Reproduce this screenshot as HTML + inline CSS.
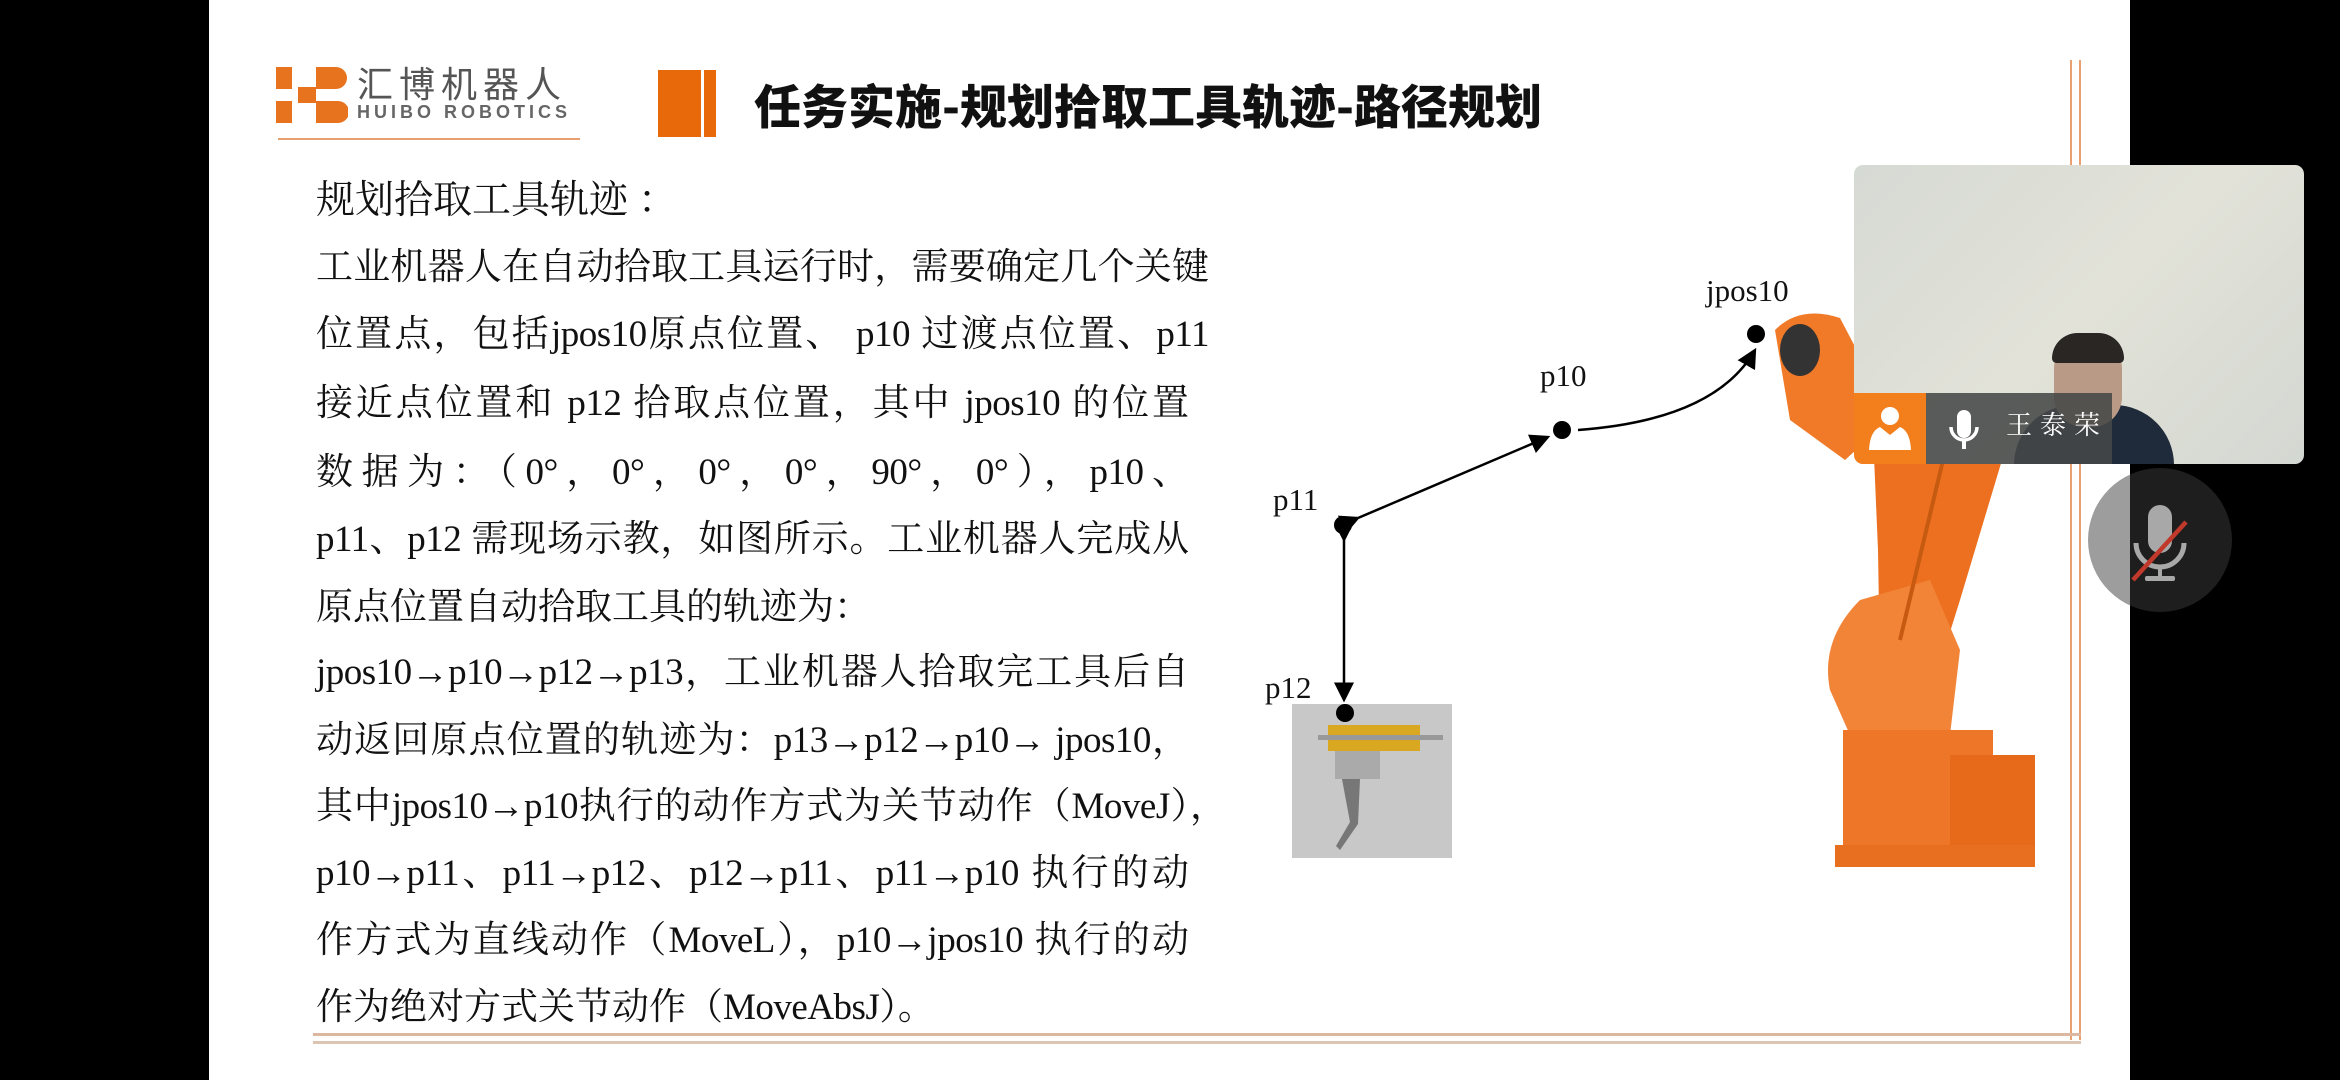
<!DOCTYPE html>
<html><head><meta charset="utf-8"><style>
html,body{margin:0;padding:0;width:2340px;height:1080px;overflow:hidden;background:#fff;position:relative}
.blk{position:absolute;background:#000;top:0;height:1080px}
.t{position:absolute;left:316px;font-family:"Liberation Serif","Noto Serif CJK SC",serif;font-size:37px;color:#111;white-space:nowrap;line-height:44px;text-align-last:justify}
.t i{font-style:normal;letter-spacing:-0.5px;font-family:"Liberation Serif",serif}
.lbl{position:absolute;font-family:"Liberation Serif",serif;font-size:31px;color:#111;line-height:34px}
</style></head><body>
<div class="blk" style="left:0;width:209px"></div>
<div class="blk" style="left:2130px;width:210px"></div>

<div style="position:absolute;left:2070px;top:60px;width:2px;height:980px;background:#e8a070"></div>
<div style="position:absolute;left:2079px;top:60px;width:2px;height:980px;background:#e8a070"></div>
<div style="position:absolute;left:313px;top:1033px;width:1768px;height:3px;background:#dcb8a0"></div>
<div style="position:absolute;left:313px;top:1041px;width:1768px;height:3px;background:#dcc4b0"></div>

<svg style="position:absolute;left:276px;top:67px" width="72" height="58" viewBox="0 0 72 58">
<rect x="0" y="0" width="16" height="22" fill="#e8731e"/><rect x="0" y="34" width="16" height="22" fill="#e8731e"/>
<rect x="22" y="20" width="18" height="16" fill="#e8731e"/>
<path d="M40 0h20a10 10 0 0 1 0 22h-20z" fill="#e8731e"/><path d="M40 34h22a11 11 0 0 1 0 22h-22z" fill="#e8731e"/>
</svg>
<div style="position:absolute;left:357px;top:62px;font-family:'Noto Sans CJK SC',sans-serif;font-size:36px;color:#555;letter-spacing:6px;line-height:40px">汇博机器人</div>
<div style="position:absolute;left:357px;top:102px;font-family:'Liberation Sans',sans-serif;font-size:18px;font-weight:bold;color:#666;letter-spacing:4px">HUIBO ROBOTICS</div>
<div style="position:absolute;left:278px;top:138px;width:302px;height:2px;background:#e8a070"></div>

<div style="position:absolute;left:658px;top:70px;width:43px;height:67px;background:#e8690a"></div>
<div style="position:absolute;left:704px;top:70px;width:12px;height:67px;background:#e8690a"></div>
<div style="position:absolute;left:754px;top:74px;font-family:'Noto Sans CJK SC',sans-serif;font-weight:900;font-size:47px;color:#111;line-height:60px;white-space:nowrap">任务实施-规划拾取工具轨迹-路径规划</div>

<div style="position:absolute;left:316px;top:173px;font-family:'Noto Serif CJK SC',serif;font-size:39px;color:#111;line-height:48px;white-space:nowrap">规划拾取工具轨迹 ：</div>

<div class="t" style="top:246px;width:893px">工业机器人在自动拾取工具运行时，需要确定几个关键</div>
<div class="t" style="top:313px;width:893px">位置点，包括<i>jpos10</i>原点位置、 <i>p10</i> 过渡点位置、<i>p11</i></div>
<div class="t" style="top:382px;width:873px">接近点位置和 <i>p12</i> 拾取点位置，其中 <i>jpos10</i> 的位置</div>
<div class="t" style="top:451px;width:873px">数据为：（<i>0°</i>，<i>0°</i>，<i>0°</i>，<i>0°</i>，<i>90°</i>，<i>0°</i>），<i>p10</i>、</div>
<div class="t" style="top:518px;width:873px"><i>p11</i>、<i>p12</i> 需现场示教，如图所示。工业机器人完成从</div>
<div class="t" style="top:586px;width:542px">原点位置自动拾取工具的轨迹为：</div>
<div class="t" style="top:651px;width:873px"><i>jpos10→p10→p12→p13</i>，工业机器人拾取完工具后自</div>
<div class="t" style="top:719px;width:873px">动返回原点位置的轨迹为：<i>p13→p12→p10→ jpos10</i>，</div>
<div class="t" style="top:785px;width:911px">其中<i>jpos10→p10</i>执行的动作方式为关节动作（<i>MoveJ</i>），</div>
<div class="t" style="top:852px;width:873px"><i>p10→p11</i>、<i>p11→p12</i>、<i>p12→p11</i>、<i>p11→p10</i> 执行的动</div>
<div class="t" style="top:919px;width:873px">作方式为直线动作（<i>MoveL</i>），<i>p10→jpos10</i> 执行的动</div>
<div class="t" style="top:986px;width:617px">作为绝对方式关节动作（<i>MoveAbsJ</i>）。</div>

<svg style="position:absolute;left:0;top:0" width="2340" height="1080">
<defs><marker id="a" markerWidth="8" markerHeight="8" refX="7" refY="4" orient="auto"><path d="M0 0L8 4L0 8z" fill="#000"/></marker></defs>
<g fill="#f07a28">
<path d="M1775 330 Q1800 305 1840 318 L1862 360 L1878 430 L1845 460 L1790 420z"/>
<path d="M1872 410 L1985 390 L2005 450 L1960 600 L1935 680 L1880 670 L1878 550z" fill="#ec7020"/>
<path d="M1860 600 Q1820 640 1830 690 L1850 735 L1950 735 L1960 650 L1930 580z" fill="#f28438"/>
<rect x="1843" y="730" width="150" height="120" fill="#ee7628"/>
<rect x="1950" y="755" width="85" height="90" fill="#e66a1a"/>
<rect x="1835" y="845" width="200" height="22" fill="#e86e20"/>
</g>
<ellipse cx="1800" cy="350" rx="20" ry="26" fill="#333"/>
<path d="M1955 410 L1900 640" stroke="#c55a10" stroke-width="4"/>
<rect x="1292" y="704" width="160" height="154" fill="#c8c8c8"/>
<rect x="1328" y="725" width="92" height="26" fill="#d9a820"/>
<rect x="1318" y="735" width="125" height="5" fill="#999"/>
<rect x="1335" y="751" width="45" height="28" fill="#aaa"/>
<path d="M1342 779l18 0 -2 45 -18 26 -4 -4 14 -24z" fill="#777"/>
<g stroke="#000" stroke-width="2.5" fill="none">
<line x1="1344" y1="540" x2="1344" y2="700" marker-end="url(#a)" marker-start="url(#a)"/>
<line x1="1358" y1="518" x2="1548" y2="437" marker-end="url(#a)" marker-start="url(#a)"/>
<path d="M1578 430 Q1715 420 1755 350" marker-end="url(#a)"/>
</g>
<circle cx="1756" cy="334" r="9"/><circle cx="1562" cy="430" r="9"/><circle cx="1343" cy="525" r="9"/><circle cx="1345" cy="713" r="9"/>
</svg>
<div class="lbl" style="left:1706px;top:274px">jpos10</div>
<div class="lbl" style="left:1540px;top:359px">p10</div>
<div class="lbl" style="left:1273px;top:483px">p11</div>
<div class="lbl" style="left:1265px;top:671px">p12</div>

<div style="position:absolute;left:1854px;top:165px;width:450px;height:299px;border-radius:9px;overflow:hidden;background:linear-gradient(135deg,#d6dad4,#e2e2d8 50%,#d4d8d2)">
<div style="position:absolute;left:160px;top:240px;width:160px;height:80px;background:#1f2a3a;border-radius:60px 60px 0 0"></div>
<div style="position:absolute;left:200px;top:172px;width:68px;height:90px;background:#b89a86;border-radius:32px 32px 30px 30px"></div>
<div style="position:absolute;left:198px;top:168px;width:72px;height:30px;background:#2a2624;border-radius:34px 34px 6px 6px"></div>
<div style="position:absolute;left:0;top:228px;width:72px;height:71px;background:#f27e1c"></div>
<div style="position:absolute;left:72px;top:228px;width:186px;height:71px;background:rgba(70,72,72,0.88)"></div>
<svg style="position:absolute;left:0;top:228px" width="258" height="71">
<circle cx="36" cy="23" r="9" fill="#fff"/><path d="M15 57 Q16 38 26 34 L36 42 L46 34 Q56 38 57 57z" fill="#fff"/>
<rect x="103" y="17" width="14" height="28" rx="7" fill="#fff"/><path d="M97 34a13 13 0 0 0 26 0" stroke="#fff" stroke-width="3.5" fill="none"/><rect x="108" y="47" width="4" height="9" fill="#fff"/>
</svg>
<div style="position:absolute;left:152px;top:240px;font-family:'Noto Serif CJK SC',serif;color:#fff;font-size:26px;letter-spacing:8px">王泰荣</div>
</div>

<div style="position:absolute;left:2088px;top:468px;width:144px;height:144px;border-radius:50%;background:rgba(60,60,60,0.5)"></div>
<svg style="position:absolute;left:2088px;top:468px" width="144" height="144">
<rect x="60" y="37" width="24" height="48" rx="12" fill="#a8a8a8"/>
<path d="M48 75a24 24 0 0 0 48 0" stroke="#a8a8a8" stroke-width="5" fill="none"/>
<rect x="70" y="98" width="4" height="12" fill="#a8a8a8"/><rect x="57" y="108" width="30" height="5" rx="2" fill="#a8a8a8"/>
<line x1="45" y1="112" x2="98" y2="54" stroke="#c0392b" stroke-width="4.5"/>
</svg>
</body></html>
